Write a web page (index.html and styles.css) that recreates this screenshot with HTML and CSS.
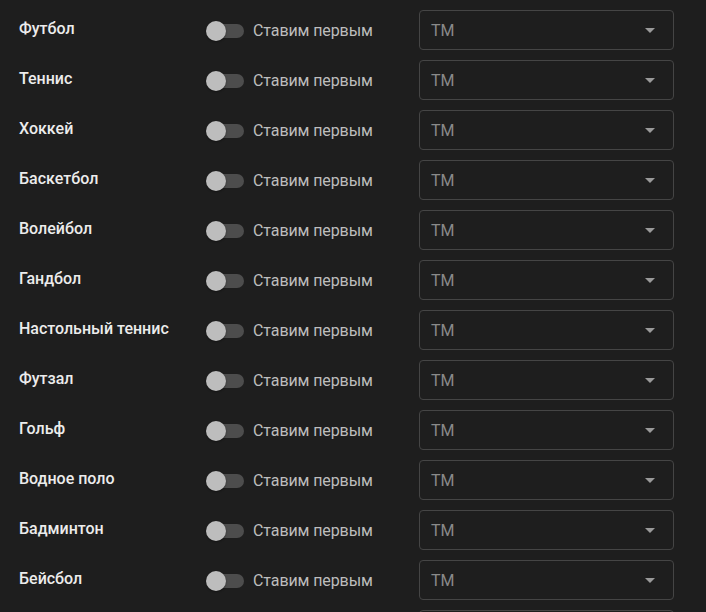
FILE: index.html
```html
<!DOCTYPE html>
<html lang="ru">
<head>
<meta charset="utf-8">
<link rel="stylesheet" href="styles.css">
</head>
<body>
<div class="list">
  <div class="row"><div class="label">Футбол</div><div class="toggle"><span class="switch"><span class="thumb"></span></span><span class="ttext">Ставим первым</span></div><div class="select"><span class="value">TM</span><span class="arrow"></span></div></div>
  <div class="row"><div class="label">Теннис</div><div class="toggle"><span class="switch"><span class="thumb"></span></span><span class="ttext">Ставим первым</span></div><div class="select"><span class="value">TM</span><span class="arrow"></span></div></div>
  <div class="row"><div class="label">Хоккей</div><div class="toggle"><span class="switch"><span class="thumb"></span></span><span class="ttext">Ставим первым</span></div><div class="select"><span class="value">TM</span><span class="arrow"></span></div></div>
  <div class="row"><div class="label">Баскетбол</div><div class="toggle"><span class="switch"><span class="thumb"></span></span><span class="ttext">Ставим первым</span></div><div class="select"><span class="value">TM</span><span class="arrow"></span></div></div>
  <div class="row"><div class="label">Волейбол</div><div class="toggle"><span class="switch"><span class="thumb"></span></span><span class="ttext">Ставим первым</span></div><div class="select"><span class="value">TM</span><span class="arrow"></span></div></div>
  <div class="row"><div class="label">Гандбол</div><div class="toggle"><span class="switch"><span class="thumb"></span></span><span class="ttext">Ставим первым</span></div><div class="select"><span class="value">TM</span><span class="arrow"></span></div></div>
  <div class="row"><div class="label">Настольный теннис</div><div class="toggle"><span class="switch"><span class="thumb"></span></span><span class="ttext">Ставим первым</span></div><div class="select"><span class="value">TM</span><span class="arrow"></span></div></div>
  <div class="row"><div class="label">Футзал</div><div class="toggle"><span class="switch"><span class="thumb"></span></span><span class="ttext">Ставим первым</span></div><div class="select"><span class="value">TM</span><span class="arrow"></span></div></div>
  <div class="row"><div class="label">Гольф</div><div class="toggle"><span class="switch"><span class="thumb"></span></span><span class="ttext">Ставим первым</span></div><div class="select"><span class="value">TM</span><span class="arrow"></span></div></div>
  <div class="row"><div class="label">Водное поло</div><div class="toggle"><span class="switch"><span class="thumb"></span></span><span class="ttext">Ставим первым</span></div><div class="select"><span class="value">TM</span><span class="arrow"></span></div></div>
  <div class="row"><div class="label">Бадминтон</div><div class="toggle"><span class="switch"><span class="thumb"></span></span><span class="ttext">Ставим первым</span></div><div class="select"><span class="value">TM</span><span class="arrow"></span></div></div>
  <div class="row"><div class="label">Бейсбол</div><div class="toggle"><span class="switch"><span class="thumb"></span></span><span class="ttext">Ставим первым</span></div><div class="select"><span class="value">TM</span><span class="arrow"></span></div></div>
  <div class="row"><div class="label"></div><div class="toggle"></div><div class="select"></div></div>
</div>
</body>
</html>
```
FILE: styles.css
```css
html, body {
  margin: 0;
  background: #1e1e1e;
  font-family: Roboto, "Liberation Sans", sans-serif;
}
.list {
  display: flex;
  flex-direction: column;
  gap: 10px;
  padding: 10px 32px 0 19px;
}
.row {
  display: grid;
  grid-template-columns: 187px 213px 255px;
  height: 40px;
  align-items: center;
}
.label {
  color: #ececec;
  font-size: 16px;
  font-weight: 500;
  margin-top: -3px;
}
.toggle {
  display: flex;
  align-items: center;
  gap: 9px;
  padding-top: 1px;
}
.switch {
  position: relative;
  width: 38px;
  height: 20px;
  display: inline-block;
}
.switch::before {
  content: "";
  position: absolute;
  left: 4px;
  right: 0;
  top: 3px;
  height: 14px;
  border-radius: 7px;
  background: #4d4d4d;
}
.thumb {
  position: absolute;
  left: 0;
  top: 0;
  width: 20px;
  height: 20px;
  border-radius: 50%;
  background: #bdbdbd;
  box-shadow: 0 1px 2px rgba(0,0,0,0.4);
}
.ttext {
  color: #bdbdbd;
  font-size: 16px;
  letter-spacing: -0.1px;
}
.select {
  box-sizing: border-box;
  height: 40px;
  border: 1px solid #454545;
  border-radius: 4px;
  display: flex;
  align-items: center;
  justify-content: space-between;
  padding: 0 18px 0 11px;
}
.value {
  color: #8a8a8a;
  font-size: 16px;
}
.arrow {
  width: 0;
  height: 0;
  border-left: 5px solid transparent;
  border-right: 5px solid transparent;
  border-top: 5px solid #9a9a9a;
}
```
